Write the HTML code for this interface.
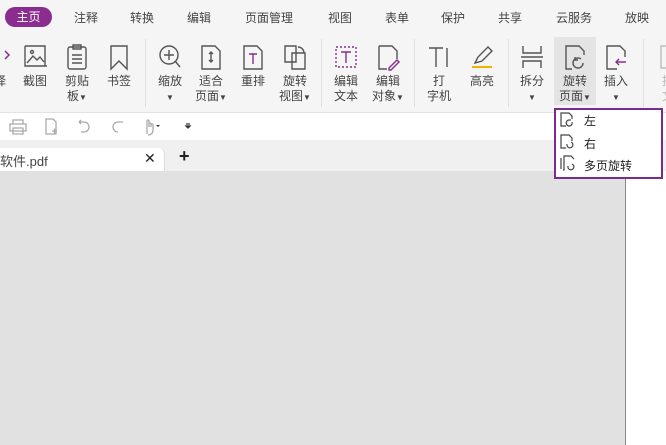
<!DOCTYPE html>
<html><head><meta charset="utf-8"><style>
*{margin:0;padding:0;box-sizing:border-box}
body{width:666px;height:445px;overflow:hidden;position:relative;background:#e1e1e1;font-family:"Liberation Sans","Noto Sans CJK SC",sans-serif;font-size:12px;color:#333}
.a{position:absolute}
.tabs{left:0;top:0;width:666px;height:33px;background:#f5f5f5}
.tab{position:absolute;top:9px;font-size:12px;color:#444}
.pill{left:5px;top:7px;width:47px;height:20px;border-radius:10px;background:#8b2d8f;color:#fff;text-align:center;line-height:20px;font-size:12px}
.rib{left:0;top:33px;width:666px;height:80px;background:#f5f5f5;border-bottom:1px solid #e2e2e2}
.it{position:absolute;top:0;width:42px;text-align:center;font-size:12px;line-height:15px;color:#444}
.it svg{display:block;margin:10px auto 3px;width:26px;height:28px}
.sep{position:absolute;top:6px;width:1px;height:68px;background:#e0e0e0}
.qt{left:0;top:113px;width:666px;height:27px;background:#fff}
.tb{left:0;top:140px;width:666px;height:31px;background:#f0f0f0}
.ar{font-size:8px}
</style></head><body>
<div class="a tabs"></div>
<div class="a pill">主页</div>
<div class="tab" style="left:74px">注释</div>
<div class="tab" style="left:130px">转换</div>
<div class="tab" style="left:187px">编辑</div>
<div class="tab" style="left:245px">页面管理</div>
<div class="tab" style="left:328px">视图</div>
<div class="tab" style="left:385px">表单</div>
<div class="tab" style="left:441px">保护</div>
<div class="tab" style="left:498px">共享</div>
<div class="tab" style="left:556px">云服务</div>
<div class="tab" style="left:625px">放映</div>

<div class="a rib">
<div class="a" style="left:554px;top:4px;width:42px;height:68px;background:#e4e4e4"></div>
<div class="it" style="left:-21px"><svg viewBox="0 0 26 28"><path d="M18 8l4 4-4 4" fill="none" stroke="#8b2d8f" stroke-width="1.5"/></svg>择</div>
<div class="it" style="left:14px"><svg viewBox="0 0 26 28" fill="none" stroke="#555" stroke-width="1.4"><path d="M3 3h20v20M3 3v20h22M5 20l6-7 4 4 3-3 4 5"/><circle cx="10" cy="9" r="1.5"/></svg>截图</div>
<div class="it" style="left:56px"><svg viewBox="0 0 26 28" fill="none" stroke="#555" stroke-width="1.4"><rect x="4" y="4" width="18" height="22" rx="2"/><path d="M9 2h8v4H9zM8 12h10M8 16h10M8 20h10"/></svg>剪贴<br>板<span class="ar">▼</span></div>
<div class="it" style="left:98px"><svg viewBox="0 0 26 28" fill="none" stroke="#555" stroke-width="1.4"><path d="M5 3h16v23l-8-8-8 8z"/></svg>书签</div>
<div class="sep" style="left:145px"></div>
<div class="it" style="left:149px"><svg viewBox="0 0 26 28" fill="none" stroke="#555" stroke-width="1.4"><circle cx="12" cy="12" r="9"/><path d="M12 7v10M7 12h10M18 18l5 6"/></svg>缩放<br><span class="ar">▼</span></div>
<div class="it" style="left:190px"><svg viewBox="0 0 26 28" fill="none" stroke="#555" stroke-width="1.4"><path d="M4 3h13l5 5v18H4zM13 9v10M11 11l2-2 2 2M11 17l2 2 2-2"/></svg>适合<br>页面<span class="ar">▼</span></div>
<div class="it" style="left:232px"><svg viewBox="0 0 26 28" fill="none" stroke="#555" stroke-width="1.4"><path d="M4 3h13l5 5v18H4z"/><path d="M9 11h8M13 11v10" stroke="#8b2d8f"/></svg>重排</div>
<div class="it" style="left:274px"><svg viewBox="0 0 26 28" fill="none" stroke="#555" stroke-width="1.4"><path d="M3 3h11v16H3zM10 10h13v16H10zM16 4a6 6 0 0 1 6 6"/></svg>旋转<br>视图<span class="ar">▼</span></div>
<div class="sep" style="left:321px"></div>
<div class="it" style="left:325px"><svg viewBox="0 0 26 28" fill="none" stroke="#8b2d8f" stroke-width="1.4"><rect x="3" y="4" width="20" height="20" stroke-dasharray="2 2"/><path d="M8 9h10M13 9v11"/></svg>编辑<br>文本</div>
<div class="it" style="left:367px"><svg viewBox="0 0 26 28" fill="none" stroke="#555" stroke-width="1.4"><path d="M4 3h13l5 5v8M12 26H4V3"/><path d="M14 25l8-8 2 2-8 8h-2z" stroke="#8b2d8f"/></svg>编辑<br>对象<span class="ar">▼</span></div>
<div class="sep" style="left:414px"></div>
<div class="it" style="left:418px"><svg viewBox="0 0 26 28" fill="none" stroke="#555" stroke-width="1.4"><path d="M3 5h14M10 5v19M21 5v19"/></svg>打<br>字机</div>
<div class="it" style="left:461px"><svg viewBox="0 0 26 28" fill="none" stroke-width="1.4"><path d="M6 20l3-6 10-10 4 4-10 10z" stroke="#555"/><path d="M3 24h20" stroke="#f0b400" stroke-width="2"/></svg>高亮</div>
<div class="sep" style="left:508px"></div>
<div class="it" style="left:511px"><svg viewBox="0 0 26 28" fill="none" stroke="#555" stroke-width="1.4"><path d="M4 3v7h18V3M4 25v-7h18v7M2 14h22"/></svg>拆分<br><span class="ar">▼</span></div>
<div class="it" style="left:554px"><svg viewBox="0 0 26 28" fill="none" stroke="#555" stroke-width="1.4"><path d="M10 26H4V3h13l5 5v4"/><path d="M21 20a5 5 0 1 1-2-4M13 14v3h3"/></svg>旋转<br>页面<span class="ar">▼</span></div>
<div class="it" style="left:595px"><svg viewBox="0 0 26 28" fill="none" stroke="#555" stroke-width="1.4"><path d="M14 26H4V3h13l5 5v6"/><path d="M23 19H13M16 16l-3 3 3 3" stroke="#8b2d8f"/></svg>插入<br><span class="ar">▼</span></div>
<div class="sep" style="left:643px"></div>
<div class="it" style="left:647px;color:#bbb"><svg viewBox="0 0 26 28" fill="none" stroke="#bbb" stroke-width="1.4"><path d="M6 3h15v22H6z"/></svg>提<br>文</div>
</div>

<div class="a qt"></div>
<svg class="a" style="left:0;top:116px" width="200" height="22" fill="none" stroke="#aaa" stroke-width="1.3">
<path d="M13 8V4h10v4M10 8h16v7H10zM13 12h10v6H13z"/>
<path d="M46 3h7l3 3v12H46zM52 15h5M54.5 12.5v5"/>
<path d="M79 6h5a5 5 0 0 1 0 10h-3M79 6l2-2M79 6l2 2"/>
<path d="M123 6h-5a5 5 0 0 0 0 10"/>
<path d="M147 18v-8M147 10v-5a1 1 0 0 1 2 0v6M149 8a1 1 0 0 1 2 0v3M151 9a1 1 0 0 1 2 0v5c0 3-2 5-5 5"/>
<path d="M156 9l2 2 2-2z" fill="#333" stroke="none"/>
<path d="M186 8h4M186 10l2 2 2-2z" stroke="#333" fill="#333"/>
</svg>

<div class="a tb"></div>
<div class="a" style="left:0;top:148px;width:165px;height:23px;background:#fff;border-right:1px solid #ddd;border-radius:0 6px 0 0"></div>
<div class="a" style="left:0;top:151px;font-size:13px;color:#444">软件.pdf</div>
<div class="a" style="left:144px;top:150px;font-size:14px;color:#222">✕</div>
<div class="a" style="left:179px;top:146px;font-size:18px;color:#222;font-weight:bold">+</div>

<div class="a" style="left:625px;top:171px;width:41px;height:274px;background:#fff;border-left:1px solid #888"></div>

<div class="a" style="left:554px;top:108px;width:109px;height:71px;background:#fff;border:2px solid #7b2b8b"></div>
<svg class="a" style="left:558px;top:111px" width="24" height="66" fill="none" stroke="#444" stroke-width="1.2">
<path d="M8 15H3V2h8l3 3v3M14 11a3 3 0 1 1-3-2h2"/>
<path d="M8 37H3V24h8l3 3v3M9 33a3 3 0 1 0 4-2"/>
<path d="M3 47v11M5 59H6V45h7l3 3M10 55a3 3 0 1 0 4-2"/>
</svg>
<div class="a" style="left:584px;top:112px;font-size:12px;color:#222">左</div>
<div class="a" style="left:584px;top:135px;font-size:12px;color:#222">右</div>
<div class="a" style="left:584px;top:157px;font-size:12px;color:#222">多页旋转</div>
</body></html>
